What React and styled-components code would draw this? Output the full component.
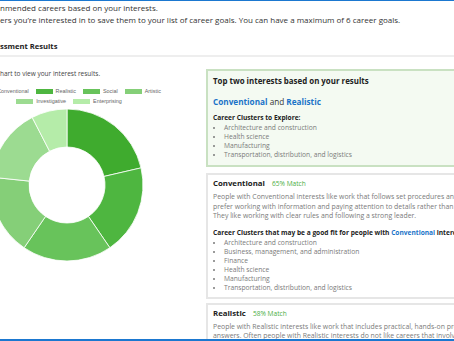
import React from 'react'
import styled, { createGlobalStyle } from 'styled-components'

const interests = [
    { name: 'Conventional', value: 65, color: '#3fab2e' },
    { name: 'Realistic', value: 58, color: '#4eb640' },
    { name: 'Social', value: 58, color: '#68c35b' },
    { name: 'Artistic', value: 52, color: '#85cf78' },
    { name: 'Investigative', value: 48, color: '#9cdb91' },
    { name: 'Enterprising', value: 23, color: '#b5eca9' },
]

const legendRows = [
    ['Conventional', 'Realistic', 'Social', 'Artistic'],
    ['Investigative', 'Enterprising'],
]

const topClusters = [
    'Architecture and construction',
    'Health science',
    'Manufacturing',
    'Transportation, distribution, and logistics',
]

const conventionalClusters = [
    'Architecture and construction',
    'Business, management, and administration',
    'Finance',
    'Health science',
    'Manufacturing',
    'Transportation, distribution, and logistics',
]

function point(cx, cy, r, deg) {
    const a = (deg * Math.PI) / 180
    return [cx + r * Math.sin(a), cy - r * Math.cos(a)]
}

function slice(cx, cy, r0, r1, a0, a1) {
    const large = a1 - a0 > 180 ? 1 : 0
    const [x1, y1] = point(cx, cy, r1, a0)
    const [x2, y2] = point(cx, cy, r1, a1)
    const [x3, y3] = point(cx, cy, r0, a1)
    const [x4, y4] = point(cx, cy, r0, a0)
    return `M${x1} ${y1} A${r1} ${r1} 0 ${large} 1 ${x2} ${y2} L${x3} ${y3} A${r0} ${r0} 0 ${large} 0 ${x4} ${y4} Z`
}

function Donut() {
    const total = interests.reduce((s, i) => s + i.value, 0)
    let start = 0
    return (
        <ChartSvg width="190" height="154" viewBox="0 0 190 154">
            {interests.map((i) => {
                const end = start + (i.value / total) * 360
                const d = slice(95, 77, 38, 76, start, end)
                start = end
                return <path key={i.name} d={d} fill={i.color} stroke="#fff" strokeWidth="0.8" />
            })}
        </ChartSvg>
    )
}

function App() {
    const colorOf = (name) => interests.find((i) => i.name === name).color
    return (
        <Page>
            <GlobalStyle />
            <Intro>
                <p>nmended careers based on your interests.</p>
                <p>ers you’re interested in to save them to your list of career goals. You can have a maximum of 6 career goals.</p>
            </Intro>
            <SectionTitle>ssment Results</SectionTitle>
            <Columns>
                <ChartColumn>
                    <Hint>hart to view your interest results.</Hint>
                    <ChartBox>
                        {legendRows.map((row, r) => (
                            <LegendRow key={r}>
                                {row.map((name) => (
                                    <LegendItem key={name}>
                                        <Swatch color={colorOf(name)} />
                                        {name}
                                    </LegendItem>
                                ))}
                            </LegendRow>
                        ))}
                        <Donut />
                    </ChartBox>
                </ChartColumn>
                <Results>
                    <Card highlight>
                        <CardTitle>Top two interests based on your results</CardTitle>
                        <TopPair>
                            <Link>Conventional</Link> and <Link>Realistic</Link>
                        </TopPair>
                        <ListLabel>Career Clusters to Explore:</ListLabel>
                        <List>
                            {topClusters.map((c) => <li key={c}>{c}</li>)}
                        </List>
                    </Card>
                    <Card>
                        <Heading>
                            Conventional <Match>65% Match</Match>
                        </Heading>
                        <Para>
                            People with Conventional interests like work that follows set procedures and routines. They
                            <br />
                            prefer working with information and paying attention to details rather than working with ideas.
                            <br />
                            They like working with clear rules and following a strong leader.
                        </Para>
                        <ListLabel spaced>
                            Career Clusters that may be a good fit for people with <Link>Conventional</Link> interests:
                        </ListLabel>
                        <List>
                            {conventionalClusters.map((c) => <li key={c}>{c}</li>)}
                        </List>
                    </Card>
                    <Card>
                        <Heading>
                            Realistic <Match>58% Match</Match>
                        </Heading>
                        <Para>
                            People with Realistic interests like work that includes practical, hands-on problems and
                            <br />
                            answers. Often people with Realistic interests do not like careers that involve paperwork.
                        </Para>
                    </Card>
                </Results>
            </Columns>
        </Page>
    )
}

export default App

const GlobalStyle = createGlobalStyle`
    html, body {
        margin: 0;
        padding: 0;
        background: #fff;
        overflow: hidden;
    }
    body {
        font-family: "Open Sans", "Noto Sans", sans-serif;
        color: #333;
    }
`

const Page = styled.div`
    width: 454px;
    height: 341px;
    box-sizing: border-box;
    overflow: hidden;
    border-top: 1px solid #1b78d0;
    border-bottom: 2px solid #1b78d0;
    background: #fff;
`

const Intro = styled.div`
    padding-top: 1px;
    font-size: 8px;
    line-height: 11.5px;
    color: #333;
    white-space: nowrap;

    p {
        margin: 0;
    }
`

const SectionTitle = styled.h2`
    margin: 14px 0 0;
    padding-bottom: 2px;
    font-size: 7.6px;
    line-height: 14px;
    font-weight: 700;
    color: #222;
    border-bottom: 2px solid #eeeeee;
`

const Columns = styled.div`
    display: flex;
    align-items: flex-start;
`

const ChartColumn = styled.div`
    flex: none;
    width: 206px;
    display: flex;
    flex-direction: column;
`

const Hint = styled.p`
    margin: 12px 0 0;
    font-size: 6.5px;
    line-height: 10px;
    color: #444;
    white-space: nowrap;
`

const ChartBox = styled.div`
    margin: 7px 0 0 -28px;
    width: 190px;
    display: flex;
    flex-direction: column;
    align-items: center;
`

const LegendRow = styled.div`
    display: flex;
    justify-content: center;
    gap: 7px;
    height: 10px;
    align-items: center;
    padding-left: 4px;
`

const LegendItem = styled.span`
    display: flex;
    align-items: center;
    gap: 3px;
    font-family: "Liberation Sans", Arial, sans-serif;
    font-size: 5.4px;
    color: #666;
    white-space: nowrap;
`

const Swatch = styled.span`
    width: 17px;
    height: 5px;
    background: ${(p) => p.color};
`

const ChartSvg = styled.svg`
    display: block;
    margin-top: 2px;
`

const Results = styled.div`
    flex: none;
    width: 330px;
    margin-top: 12px;
    display: flex;
    flex-direction: column;
`

const Card = styled.section`
    border: ${(p) => (p.highlight ? '2px solid #c9e1c2' : '2px solid #e6e6e6')};
    background: ${(p) => (p.highlight ? '#f4faf2' : '#fff')};
    padding: ${(p) => (p.highlight ? '3px 6px 6px 5px' : '2px 6px 5px 5px')};
    margin-bottom: ${(p) => (p.highlight ? '6px' : '4px')};
    white-space: nowrap;
`

const CardTitle = styled.h3`
    margin: 0;
    font-size: 7.9px;
    line-height: 14px;
    font-weight: 700;
    color: #222;
`

const TopPair = styled.div`
    margin-top: 7px;
    font-size: 8.2px;
    line-height: 14px;
    font-weight: 400;
    color: #333;
`

const Link = styled.span`
    color: #1a73c8;
    font-weight: 700;
`

const ListLabel = styled.div`
    margin-top: ${(p) => (p.spaced ? '6px' : '3px')};
    font-size: 6.6px;
    line-height: 11px;
    font-weight: 700;
    color: #222;
`

const List = styled.ul`
    margin: 0;
    padding: 0 0 0 11px;
    font-size: 6.7px;
    line-height: 9px;
    color: #7a7a7a;

    li::marker {
        font-size: 6px;
    }
`

const Heading = styled.h3`
    margin: 0;
    font-size: 7.8px;
    line-height: 13px;
    font-weight: 700;
    color: #222;
`

const Match = styled.span`
    margin-left: 5px;
    font-size: 6.6px;
    font-weight: 400;
    color: #4cae3f;
`

const Para = styled.p`
    margin: 2px 0 0;
    font-size: 6.9px;
    line-height: 9.5px;
    color: #7a7a7a;
`
